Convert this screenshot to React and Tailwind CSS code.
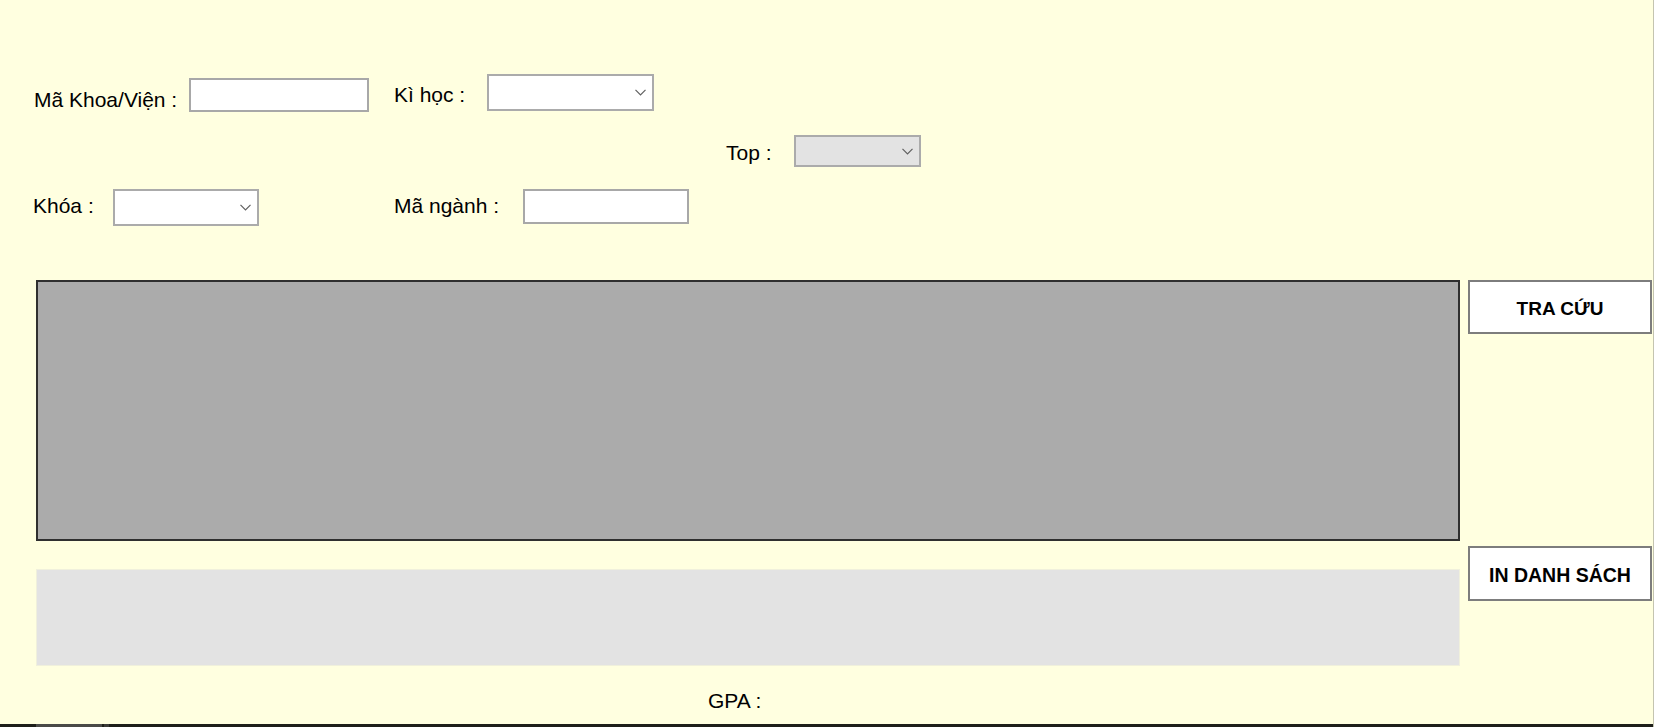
import React from "react";

function Chevron() {
    return (
        <svg width="11" height="7" viewBox="0 0 11 7" fill="none">
            <polyline points="0.5,0.8 5.5,5.8 10.5,0.8" stroke="#606060" strokeWidth="1.2" />
        </svg>
    );
}

function Select({ className }) {
    return (
        <div className={`flex items-center justify-end pr-[6px] border-2 border-[#ababab] ${className}`}>
            <Chevron />
        </div>
    );
}

function TextBox({ className }) {
    return <div className={`bg-white border-2 border-[#a8a8a8] ${className}`} />;
}

export default function App() {
    return (
        <div className="w-[1654px] h-[727px] overflow-hidden bg-[#ffffe0] border-r border-[#c4c4b0] flex flex-col font-['Liberation_Sans',Arial,sans-serif] text-black text-[21px] leading-[23px]">
            <div className="h-[724px] flex flex-col pt-[74px]">
                {/* row 1 */}
                <div className="h-[61px] flex items-start">
                    <div className="ml-[34px] w-[155px] mt-[14px]">Mã Khoa/Viện :</div>
                    <TextBox className="w-[180px] h-[34px] mt-[4px]" />
                    <div className="ml-[25px] w-[93px] mt-[9px]">Kì học :</div>
                    <Select className="w-[167px] h-[37px] bg-white" />
                </div>

                {/* row 2 */}
                <div className="h-[54px] flex items-start">
                    <div className="ml-[726px] w-[68px] mt-[6px]">Top :</div>
                    <Select className="w-[127px] h-[32px] bg-[#e3e3e3]" />
                </div>

                {/* row 3 */}
                <div className="h-[37px] flex items-start">
                    <div className="ml-[33px] w-[80px] mt-[5px]">Khóa :</div>
                    <Select className="w-[146px] h-[37px] bg-white" />
                    <div className="ml-[135px] w-[129px] mt-[5px]">Mã ngành :</div>
                    <TextBox className="w-[166px] h-[35px]" />
                </div>

                {/* grid + buttons */}
                <div className="mt-[54px] flex items-start">
                    <div className="ml-[36px] w-[1424px] flex flex-col">
                        <div className="h-[261px] bg-[#ababab] border-2 border-[#2f2f2f]" />
                        <div className="mt-[28px] h-[97px] bg-[#e3e3e3] border border-[#f0f0dc]" />
                        <div className="mt-[23px] pl-[672px]">GPA :</div>
                    </div>
                    <div className="ml-[8px] w-[184px] flex flex-col">
                        <button className="h-[54px] pt-[3px] bg-white border-2 border-[#7d7d7d] font-bold text-[19px]">
                            TRA CỨU
                        </button>
                        <button className="mt-[212px] h-[55px] pt-[4px] bg-white border-2 border-[#7d7d7d] font-bold text-[19.5px]">
                            IN DANH SÁCH
                        </button>
                    </div>
                </div>
            </div>

            {/* taskbar strip */}
            <div className="h-[3px] flex bg-[#1e1f1a]">
                <div className="ml-[36px] w-[66px] bg-[#4a4a48]" />
                <div className="ml-[2px] w-[5px] bg-[#3a3a38]" />
            </div>
        </div>
    );
}
